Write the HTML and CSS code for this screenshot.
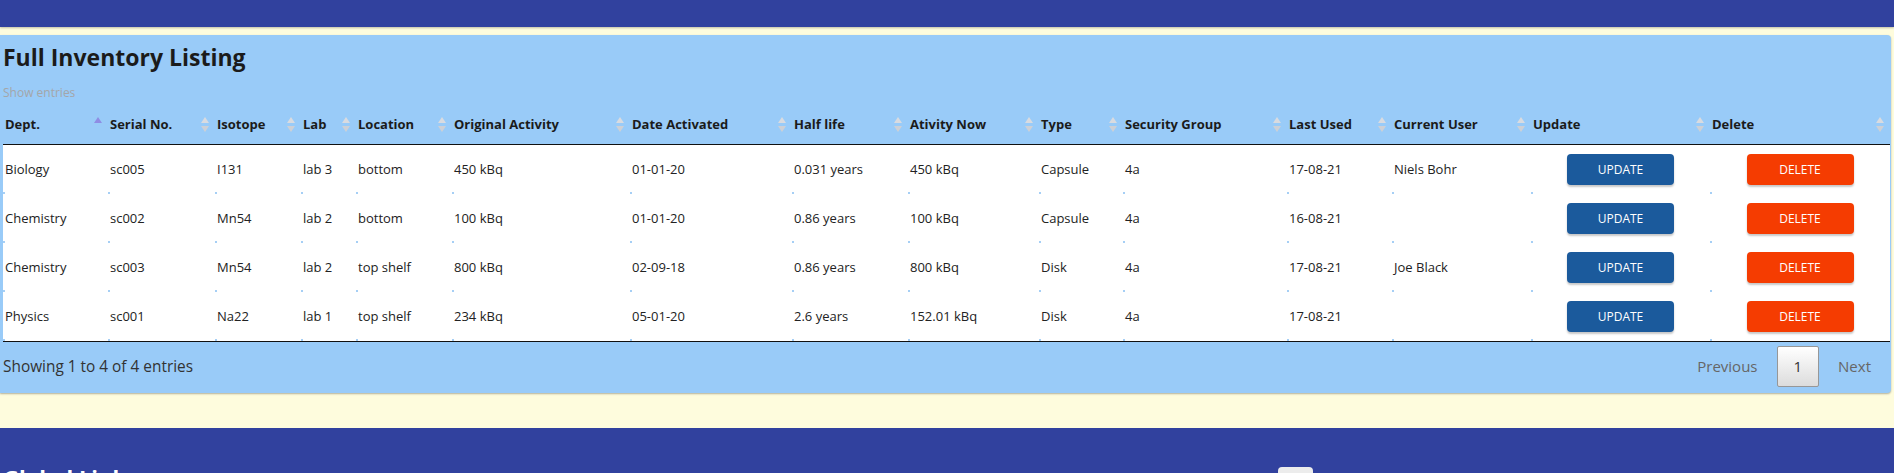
FILE: index.html
```html
<!DOCTYPE html>
<html lang="en">
<head>
<meta charset="utf-8">
<title>Full Inventory Listing</title>
<link rel="stylesheet" href="styles.css">
</head>
<body>
<header class="topbar"></header>
<main class="page">
  <section class="card">
    <h1 class="title">Full Inventory Listing</h1>
    <div class="length">Show entries</div>
    <table class="grid">
      <colgroup>
        <col style="width:105px"><col style="width:107px"><col style="width:86px"><col style="width:55px"><col style="width:96px"><col style="width:178px"><col style="width:162px"><col style="width:116px"><col style="width:131px"><col style="width:84px"><col style="width:164px"><col style="width:105px"><col style="width:139px"><col style="width:179px"><col style="width:180px">
      </colgroup>
      <thead>
        <tr>
          <th><div class="thc"><span>Dept.</span><svg class="sort" width="8" height="15" viewBox="0 0 8 15"><path d="M4 0L8 6H0z" fill="#8f8de4"/></svg></div></th>
          <th><div class="thc"><span>Serial No.</span><svg class="sort" width="8" height="15" viewBox="0 0 8 15"><path d="M4 0L8 6H0z" fill="#d9dbe0"/><path d="M0 9H8L4 15z" fill="#cdd0d6"/></svg></div></th>
          <th><div class="thc"><span>Isotope</span><svg class="sort" width="8" height="15" viewBox="0 0 8 15"><path d="M4 0L8 6H0z" fill="#d9dbe0"/><path d="M0 9H8L4 15z" fill="#cdd0d6"/></svg></div></th>
          <th><div class="thc"><span>Lab</span><svg class="sort" width="8" height="15" viewBox="0 0 8 15"><path d="M4 0L8 6H0z" fill="#d9dbe0"/><path d="M0 9H8L4 15z" fill="#cdd0d6"/></svg></div></th>
          <th><div class="thc"><span>Location</span><svg class="sort" width="8" height="15" viewBox="0 0 8 15"><path d="M4 0L8 6H0z" fill="#d9dbe0"/><path d="M0 9H8L4 15z" fill="#cdd0d6"/></svg></div></th>
          <th><div class="thc"><span>Original Activity</span><svg class="sort" width="8" height="15" viewBox="0 0 8 15"><path d="M4 0L8 6H0z" fill="#d9dbe0"/><path d="M0 9H8L4 15z" fill="#cdd0d6"/></svg></div></th>
          <th><div class="thc"><span>Date Activated</span><svg class="sort" width="8" height="15" viewBox="0 0 8 15"><path d="M4 0L8 6H0z" fill="#d9dbe0"/><path d="M0 9H8L4 15z" fill="#cdd0d6"/></svg></div></th>
          <th><div class="thc"><span>Half life</span><svg class="sort" width="8" height="15" viewBox="0 0 8 15"><path d="M4 0L8 6H0z" fill="#d9dbe0"/><path d="M0 9H8L4 15z" fill="#cdd0d6"/></svg></div></th>
          <th><div class="thc"><span>Ativity Now</span><svg class="sort" width="8" height="15" viewBox="0 0 8 15"><path d="M4 0L8 6H0z" fill="#d9dbe0"/><path d="M0 9H8L4 15z" fill="#cdd0d6"/></svg></div></th>
          <th><div class="thc"><span>Type</span><svg class="sort" width="8" height="15" viewBox="0 0 8 15"><path d="M4 0L8 6H0z" fill="#d9dbe0"/><path d="M0 9H8L4 15z" fill="#cdd0d6"/></svg></div></th>
          <th><div class="thc"><span>Security Group</span><svg class="sort" width="8" height="15" viewBox="0 0 8 15"><path d="M4 0L8 6H0z" fill="#d9dbe0"/><path d="M0 9H8L4 15z" fill="#cdd0d6"/></svg></div></th>
          <th><div class="thc"><span>Last Used</span><svg class="sort" width="8" height="15" viewBox="0 0 8 15"><path d="M4 0L8 6H0z" fill="#d9dbe0"/><path d="M0 9H8L4 15z" fill="#cdd0d6"/></svg></div></th>
          <th><div class="thc"><span>Current User</span><svg class="sort" width="8" height="15" viewBox="0 0 8 15"><path d="M4 0L8 6H0z" fill="#d9dbe0"/><path d="M0 9H8L4 15z" fill="#cdd0d6"/></svg></div></th>
          <th><div class="thc"><span>Update</span><svg class="sort" width="8" height="15" viewBox="0 0 8 15"><path d="M4 0L8 6H0z" fill="#d9dbe0"/><path d="M0 9H8L4 15z" fill="#cdd0d6"/></svg></div></th>
          <th><div class="thc"><span>Delete</span><svg class="sort" width="8" height="15" viewBox="0 0 8 15"><path d="M4 0L8 6H0z" fill="#d9dbe0"/><path d="M0 9H8L4 15z" fill="#cdd0d6"/></svg></div></th>
        </tr>
      </thead>
      <tbody>
        <tr>
          <td>Biology</td><td>sc005</td><td>I131</td><td>lab 3</td><td>bottom</td><td>450 kBq</td><td>01-01-20</td><td>0.031 years</td><td>450 kBq</td><td>Capsule</td><td>4a</td><td>17-08-21</td><td>Niels Bohr</td>
          <td class="act"><button class="btn btn-update">UPDATE</button></td>
          <td class="act"><button class="btn btn-delete">DELETE</button></td>
        </tr>
        <tr>
          <td>Chemistry</td><td>sc002</td><td>Mn54</td><td>lab 2</td><td>bottom</td><td>100 kBq</td><td>01-01-20</td><td>0.86 years</td><td>100 kBq</td><td>Capsule</td><td>4a</td><td>16-08-21</td><td></td>
          <td class="act"><button class="btn btn-update">UPDATE</button></td>
          <td class="act"><button class="btn btn-delete">DELETE</button></td>
        </tr>
        <tr>
          <td>Chemistry</td><td>sc003</td><td>Mn54</td><td>lab 2</td><td>top shelf</td><td>800 kBq</td><td>02-09-18</td><td>0.86 years</td><td>800 kBq</td><td>Disk</td><td>4a</td><td>17-08-21</td><td>Joe Black</td>
          <td class="act"><button class="btn btn-update">UPDATE</button></td>
          <td class="act"><button class="btn btn-delete">DELETE</button></td>
        </tr>
        <tr>
          <td>Physics</td><td>sc001</td><td>Na22</td><td>lab 1</td><td>top shelf</td><td>234 kBq</td><td>05-01-20</td><td>2.6 years</td><td>152.01 kBq</td><td>Disk</td><td>4a</td><td>17-08-21</td><td></td>
          <td class="act"><button class="btn btn-update">UPDATE</button></td>
          <td class="act"><button class="btn btn-delete">DELETE</button></td>
        </tr>
      </tbody>
    </table>
    <div class="tfoot">
      <div class="info">Showing 1 to 4 of 4 entries</div>
      <nav class="pager">
        <span class="pg pg-off">Previous</span>
        <span class="pg pg-cur">1</span>
        <span class="pg pg-off">Next</span>
      </nav>
    </div>
  </section>
</main>
<footer class="foot">
  <h2 class="foot-title">Global Links</h2>
  <div class="foot-box"></div>
</footer>
</body>
</html>
```
FILE: styles.css
```css
* { box-sizing: border-box; }
html, body { margin: 0; }
body {
  background: #fefcdd;
  font-family: "Open Sans", "Liberation Sans", sans-serif;
  color: #222;
  overflow: hidden;
}
.topbar {
  height: 27px;
  background: #31419e;
  box-shadow: 0 1px 2px rgba(0, 0, 0, 0.25);
}
.page {
  padding: 8px 3px 35px 0;
}
.card {
  background: #99cbf8;
  border-radius: 0 4px 4px 0;
  box-shadow: 0 1px 2px rgba(0, 0, 0, 0.3);
  padding: 8px 1px 7px 3px;
}
.title {
  margin: 0;
  font-size: 23px;
  line-height: 28px;
  font-weight: 700;
  color: #1b1b1b;
}
.length {
  margin-top: 13px;
  font-size: 12px;
  line-height: 17px;
  color: #a4a6a9;
}
.grid {
  margin-top: 3px;
  width: 1887px;
  table-layout: fixed;
  border-collapse: separate;
  border-spacing: 0;
  border-bottom: 1px solid #111;
}
.grid th {
  padding: 10px 0 10px 2px;
  font-size: 13px;
  line-height: 20px;
  font-weight: 700;
  text-align: left;
  color: #1b1b1b;
  border-bottom: 1px solid #111;
}
.thc {
  display: flex;
  align-items: center;
  justify-content: space-between;
  padding-right: 6px;
  white-space: nowrap;
}
.sort { flex: none; display: block; }
.grid td {
  height: 49px;
  padding: 0 0 0 2px;
  vertical-align: middle;
  font-size: 13px;
  line-height: 19px;
  color: #222;
  background: #fff linear-gradient(#a6cff5, #a6cff5) left bottom / 2px 2px no-repeat;
  white-space: nowrap;
}
.grid td.act {
  padding: 0;
  text-align: center;
}
.btn {
  display: block;
  margin: 0 auto;
  width: 107px;
  height: 31px;
  border: 0;
  border-radius: 4px;
  color: #fff;
  font-family: "Open Sans", "Liberation Sans", sans-serif;
  font-size: 12px;
  box-shadow: 0 2px 2px rgba(0, 0, 0, 0.22);
}
.btn-update { background: #1b5a9c; }
.btn-delete { background: #f53c01; }
.tfoot {
  margin-top: 4px;
  height: 40px;
  display: flex;
  align-items: center;
  justify-content: space-between;
}
.info {
  font-size: 15.4px;
  color: #333;
}
.pager {
  display: flex;
  align-items: center;
  padding-right: 2px;
}
.pg {
  font-size: 15px;
  line-height: 21px;
  padding: 9px 16px;
  margin-left: 2px;
  border: 1px solid transparent;
  border-radius: 2px;
}
.pg-off { color: #666; }
.pg-cur {
  color: #333;
  border-color: #979797;
  background: linear-gradient(to bottom, #fff 0%, #dcdcdc 100%);
}
.foot {
  background: #31419e;
  padding: 36px 0 40px 3px;
  display: grid;
  grid-template-columns: 1275px 35px;
  align-items: start;
}
.foot-title {
  margin: 0;
  font-size: 22px;
  line-height: 26px;
  font-weight: 700;
  color: #fff;
}
.foot-box {
  margin-top: 3px;
  height: 30px;
  background: #ececec;
  border-radius: 4px;
}
```
